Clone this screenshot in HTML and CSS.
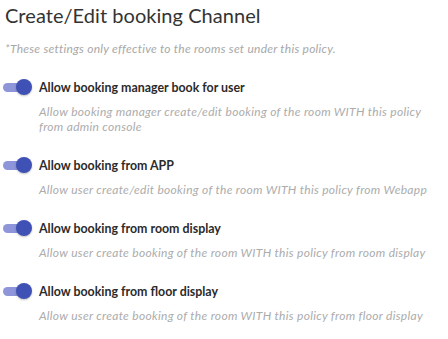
FILE: index.html
```html
<!DOCTYPE html>
<html lang="en">
<head>
  <meta charset="UTF-8" />
  <title>Create/Edit booking Channel</title>
  <link rel="stylesheet" href="styles.css">
</head>
<body>
  <div class="panel">
    <h1>Create/Edit booking Channel</h1>
    <p class="note">*These settings only effective to the rooms set under this policy.</p>

    <div class="option">
      <div class="option-head">
        <span class="toggle"><span class="knob"></span></span>
        <span class="label">Allow booking manager book for user</span>
      </div>
      <p class="desc">Allow booking manager create/edit booking of the room WITH this policy from admin console</p>
    </div>

    <div class="option">
      <div class="option-head">
        <span class="toggle"><span class="knob"></span></span>
        <span class="label">Allow booking from APP</span>
      </div>
      <p class="desc">Allow user create/edit booking of the room WITH this policy from Webapp</p>
    </div>

    <div class="option">
      <div class="option-head">
        <span class="toggle"><span class="knob"></span></span>
        <span class="label">Allow booking from room display</span>
      </div>
      <p class="desc">Allow user create booking of the room WITH this policy from room display</p>
    </div>

    <div class="option">
      <div class="option-head">
        <span class="toggle"><span class="knob"></span></span>
        <span class="label">Allow booking from floor display</span>
      </div>
      <p class="desc">Allow user create booking of the room WITH this policy from floor display</p>
    </div>
  </div>
</body>
</html>
```

FILE: styles.css
```css
html, body {
  margin: 0;
  padding: 0;
  background: #ffffff;
  font-family: 'Lato', 'Noto Sans', sans-serif;
}

.panel {
  padding: 1px 0 0 3px;
}

.panel h1 {
  margin: 0 0 0 2px;
  font-size: 20px;
  font-weight: 400;
  color: #333333;
  line-height: 28px;
  letter-spacing: 0.05px;
}

.note {
  margin: 12px 0 0 2px;
  font-size: 12px;
  font-style: italic;
  color: #a8a8a8;
  line-height: 15px;
  letter-spacing: 0.25px;
}

.option {
  margin-top: 23px;
}

.option-head {
  display: flex;
  align-items: center;
  gap: 6px;
}

.toggle {
  position: relative;
  width: 30px;
  height: 16px;
  flex-shrink: 0;
}

.toggle::before {
  content: "";
  position: absolute;
  left: 0;
  top: 4px;
  width: 27px;
  height: 9px;
  border-radius: 5px;
  background: #8e95d9;
}

.knob {
  position: absolute;
  left: 13px;
  top: 0;
  width: 16px;
  height: 16px;
  border-radius: 50%;
  background: #3f51b5;
  box-shadow: 0 1px 2px rgba(0, 0, 0, 0.25);
}

.label {
  font-size: 12.4px;
  font-weight: 700;
  color: #2b2b2b;
}

.desc {
  margin: 9px 0 0 36px;
  font-size: 12px;
  font-style: italic;
  color: #acacac;
  line-height: 15px;
  letter-spacing: 0.3px;
  max-width: 395px;
}
```
